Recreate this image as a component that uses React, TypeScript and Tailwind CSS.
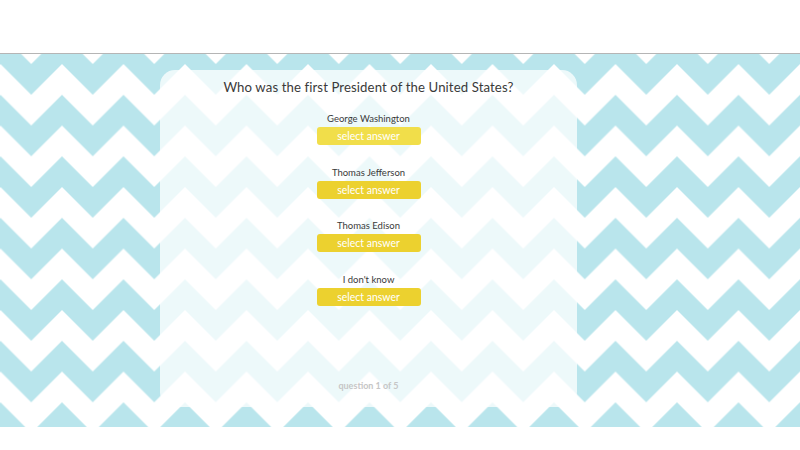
const answers = ["George Washington", "Thomas Jefferson", "Thomas Edison", "I don't know"];

function Chevrons() {
  return (
    <svg className="absolute inset-0 h-full w-full" aria-hidden="true">
      <defs>
        <pattern id="chev" width="61.5" height="61.5" x="0.5" y="-20.7" patternUnits="userSpaceOnUse">
          <polygon points="0,0 30.75,30.75 61.5,0 61.5,30.75 30.75,61.5 0,30.75" fill="#b9e5ec" />
        </pattern>
      </defs>
      <rect width="100%" height="100%" fill="url(#chev)" />
    </svg>
  );
}

export default function App() {
  return (
    <div className="h-[450px] w-[800px] overflow-hidden bg-white font-['Lato','Liberation_Sans',sans-serif]">
      <div className="h-[54px] border-b border-[#b5b5b5] bg-white" />
      <div className="relative h-[373px] bg-white">
        <Chevrons />
        <div className="relative ml-[160px] pt-[16px]">
          <div className="flex h-[337px] w-[417px] flex-col items-center rounded-[15px] bg-white/75 pt-[7px] pb-[15px]">
            <h1 className="text-[13.2px] leading-[20px] tracking-[0.1px] text-[#3a3a3a]">
              Who was the first President of the United States?
            </h1>
            <div className="mt-[16px] flex flex-col items-center gap-[21.5px]">
              {answers.map((a, i) => (
                <div key={a} className="flex flex-col items-center">
                  <p className="text-[9.5px] leading-[12px] text-[#3a3a3a]">{a}</p>
                  <button
                    className={
                      "mt-[2px] h-[18px] w-[104px] rounded-[3px] text-[10.5px] leading-[18px] text-white " +
                      (i === 0 ? "bg-[#f1de4a]" : "bg-[#ecd12f]")
                    }
                  >
                    select answer
                  </button>
                </div>
              ))}
            </div>
            <p className="mt-auto text-[9px] font-bold leading-[12px] text-[#c6c6c6]">question 1 of 5</p>
          </div>
        </div>
      </div>
    </div>
  );
}
